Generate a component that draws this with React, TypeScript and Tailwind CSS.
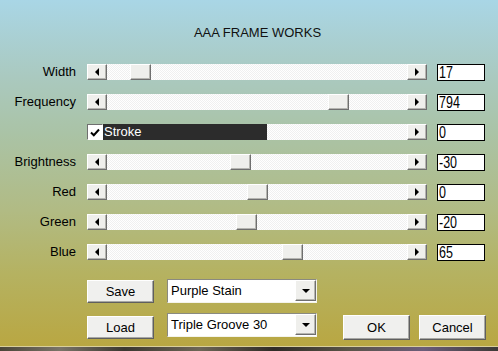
import React from 'react';

const sliders = [
  { label: 'Width', pos: 23, value: '17' },
  { label: 'Frequency', pos: 221, value: '794' },
  { label: 'Stroke', pos: -1, value: '0' },
  { label: 'Brightness', pos: 123, value: '-30' },
  { label: 'Red', pos: 140, value: '0' },
  { label: 'Green', pos: 129, value: '-20' },
  { label: 'Blue', pos: 175, value: '65' },
];

const bevel =
  'bg-[#efefec] border border-t-white border-l-white border-r-[#6f6f6f] border-b-[#6f6f6f] shadow-[inset_-1px_-1px_0_#b5b5b0]';

function Arrow({ dir }: { dir: 'left' | 'right' | 'down' }) {
  const pts = dir === 'left' ? '4,0 4,8 0,4' : dir === 'right' ? '0,0 0,8 4,4' : '0,0 8,0 4,4';
  const w = dir === 'down' ? 8 : 4;
  const h = dir === 'down' ? 4 : 8;
  return (
    <svg width={w} height={h} viewBox={`0 0 ${w} ${h}`}>
      <polygon points={pts} fill="#000" />
    </svg>
  );
}

function ScrollBtn({ dir }: { dir: 'left' | 'right' }) {
  return (
    <div className={`w-[20px] h-[16px] flex items-center justify-center shrink-0 ${bevel}`}>
      <Arrow dir={dir} />
    </div>
  );
}

function Trough({ pos }: { pos: number }) {
  return (
    <div className="flex-1 h-[16px] flex bg-[repeating-conic-gradient(#f0f0f0_0_25%,#ffffff_0_50%)] bg-[length:2px_2px]">
      <div style={{ width: pos }} />
      <div className={`w-[21px] h-[16px] ${bevel}`} />
    </div>
  );
}

function StrokeBar() {
  return (
    <div className="flex items-stretch h-[16px] w-[320px]">
      <div className="w-[16px] h-[16px] bg-white border border-t-[#6f6f6f] border-l-[#6f6f6f] border-r-white border-b-white flex items-center justify-center shrink-0">
        <svg width="10" height="9" viewBox="0 0 10 9">
          <path d="M1 4.5 L3.8 7.2 L9 1.5" stroke="#000" strokeWidth="2" fill="none" />
        </svg>
      </div>
      <div className="w-[164px] bg-[#2c2c2c] text-white text-[13px] leading-[16px] pl-[1px]">Stroke</div>
      <div className="flex-1 bg-[repeating-conic-gradient(#f0f0f0_0_25%,#ffffff_0_50%)] bg-[length:2px_2px]" />
    </div>
  );
}

function Button({ label, cls }: { label: string; cls: string }) {
  return (
    <div
      className={`w-[67px] flex items-center justify-center text-[13px] text-black bg-[#f0f0ee] border border-t-white border-l-white border-r-[#5f5f5f] border-b-[#5f5f5f] shadow-[inset_-1px_-1px_0_#a8a8a4] ${cls}`}
    >
      {label}
    </div>
  );
}

function Combo({ value }: { value: string }) {
  return (
    <div className="w-[150px] h-[24px] flex bg-white border border-t-[#8a8a80] border-l-[#8a8a80] border-r-[#f4f4ec] border-b-[#f4f4ec]">
      <div className="flex-1 pl-[3px] text-[13px] leading-[22px] text-black">{value}</div>
      <div className={`w-[21px] h-[21px] flex items-center justify-center ${bevel}`}>
        <Arrow dir="down" />
      </div>
    </div>
  );
}

export default function App() {
  return (
    <div
      className="w-[498px] h-[351px] flex flex-col overflow-hidden bg-[linear-gradient(180deg,#a9d6e6_0%,#aac9bf_22%,#aac3a6_38%,#b1bb84_60%,#b5b261_78%,#b9a640_100%)]"
      style={{ fontFamily: '"Liberation Sans", Arial, sans-serif' }}
    >
      <div className="pt-[25px] pl-[17px] text-center text-[13px] leading-[15px] text-[#111]">AAA FRAME WORKS</div>

      <div className="mt-[24px] flex flex-col gap-[14px]">
        {sliders.map((s) => (
          <div key={s.label} className="flex items-center h-[16px]">
            <div className="w-[76px] text-right text-[13px] text-black leading-[16px]">
              {s.pos >= 0 ? s.label : ''}
            </div>
            <div className="ml-[11px] w-[340px] flex">
              {s.pos >= 0 ? (
                <>
                  <ScrollBtn dir="left" />
                  <Trough pos={s.pos} />
                </>
              ) : (
                <StrokeBar />
              )}
              <ScrollBtn dir="right" />
            </div>
            <div className="ml-[10px] w-[48px] h-[17px] bg-white border border-black pl-[1px] flex items-center">
              <span className="block origin-left scale-x-[0.78] text-[16px] leading-[15px] text-black">
                {s.value}
              </span>
            </div>
          </div>
        ))}
      </div>

      <div className="mt-[19px] ml-[87px] flex items-start gap-[13px]">
        <Button label="Save" cls="h-[23px] mt-[1px]" />
        <Combo value="Purple Stain" />
      </div>
      <div className="mt-[10px] ml-[87px] flex items-start">
        <Button label="Load" cls="h-[23px] mt-[3px]" />
        <div className="ml-[13px]">
          <Combo value="Triple Groove 30" />
        </div>
        <Button label="OK" cls="h-[25px] mt-[2px] ml-[26px]" />
        <Button label="Cancel" cls="h-[25px] mt-[2px] ml-[9px]" />
      </div>

      <div className="mt-auto h-[1px] bg-[#d9cf9a]" />
      <div className="h-[4px] bg-[linear-gradient(90deg,#4a4538_0%,#7a7468_12%,#3b3730_25%,#6d6656_40%,#2f2b26_55%,#5a5448_70%,#6b5d7a_85%,#3d3a36_100%)]" />
    </div>
  );
}
